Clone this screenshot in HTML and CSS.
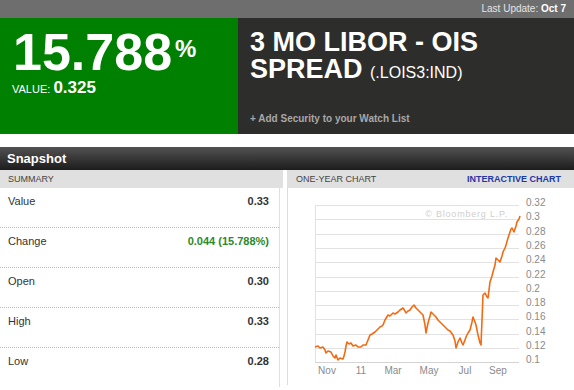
FILE: index.html
```html
<!DOCTYPE html>
<html>
<head>
  <title>3 MO LIBOR - OIS SPREAD</title>
  <link rel="stylesheet" href="styles.css">
</head>
<body>
  <div class="topbar">Last Update: <b>Oct 7</b></div>

  <div class="quote">
    <div class="quote-change">
      <div class="pct">15.788<span class="pct-sign">%</span></div>
      <div class="value-line">VALUE: <b>0.325</b></div>
    </div>
    <div class="quote-name">
      <h1>3 MO LIBOR - OIS<br>SPREAD <span class="ticker">(.LOIS3:IND)</span></h1>
      <a class="watch">+ Add Security to your Watch List</a>
    </div>
  </div>

  <div class="section-bar">Snapshot</div>

  <div class="snapshot">
    <div class="summary">
      <div class="sub-head">SUMMARY</div>
      <div class="rows">
        <div class="row"><span>Value</span><b>0.33</b></div>
        <div class="row"><span>Change</span><b class="up">0.044 (15.788%)</b></div>
        <div class="row"><span>Open</span><b>0.30</b></div>
        <div class="row"><span>High</span><b>0.33</b></div>
        <div class="row last"><span>Low</span><b>0.28</b></div>
      </div>
    </div>

    <div class="chart">
      <div class="sub-head"><span>ONE-YEAR CHART</span><a class="chart-link">INTERACTIVE CHART</a></div>
      <div class="chart-body">
        <svg width="286" height="197" viewBox="288 188 286 197">
          <!-- grid -->
          <g stroke="#e2e2e2" stroke-width="1" fill="none">
            <path d="M315 205.5H519 M315 219.5H519 M315 234.5H519 M315 248.5H519 M315 262.5H519 M315 277.5H519 M315 291.5H519 M315 305.5H519 M315 319.5H519 M315 334.5H519 M315 348.5H519"/>
            <path d="M315.5 205V362"/>
          </g>
          <path d="M315 362.5H519" stroke="#d4d4d4" stroke-width="1"/>
          <text class="mark" x="508" y="217" text-anchor="end">© Bloomberg L.P.</text>
          <!-- y labels -->
          <g class="axis">
            <text x="526" y="206">0.32</text>
            <text x="526" y="220">0.3</text>
            <text x="526" y="235">0.28</text>
            <text x="526" y="249">0.26</text>
            <text x="526" y="263">0.24</text>
            <text x="526" y="278">0.22</text>
            <text x="526" y="292">0.2</text>
            <text x="526" y="306">0.18</text>
            <text x="526" y="320">0.16</text>
            <text x="526" y="335">0.14</text>
            <text x="526" y="349">0.12</text>
            <text x="526" y="363">0.1</text>
          </g>
          <g class="axis" text-anchor="middle">
            <text x="327" y="374">Nov</text>
            <text x="361" y="374">11</text>
            <text x="393" y="374">Mar</text>
            <text x="429" y="374">May</text>
            <text x="465" y="374">Jul</text>
            <text x="498" y="374">Sep</text>
          </g>
          <polyline fill="none" stroke="#f26b12" stroke-width="1.6" stroke-linejoin="round"
            points="315,347 318,346 320,348 323,347 325,350 326,353 328,351 331,352 333,356 335,358 336,355 338,360 340,358 343,359 344,356 345,352 346,346 347,342 349,344 351,343 353,346 356,345 358,347 361,347 363,345 366,345 368,340 370,335 372,334 375,332 377,330 380,327 382,326 383,325 385,320 388,315 390,316 393,313 395,314 398,312 400,310 403,308 405,311 406,313 408,311 410,310 412,307 414,305 416,308 418,310 420,312 423,315 425,325 426,333 427,328 428,323 430,316 431,312 433,314 436,317 438,320 440,322 443,325 445,327 448,330 450,331 453,335 455,341 456,348 458,342 460,338 462,343 463,345 465,340 466,337 468,333 470,330 472,322 473,317 475,322 476,325 478,335 480,343 481,345 482,320 483,295 485,293 487,297 488,298 490,282 492,276 493,272 495,265 496,258 498,260 500,262 502,256 503,252 505,248 506,245 508,238 509,235 511,229 512,228 514,232 516,226 517,222 519,219 520,216"/>
        </svg>
      </div>
    </div>
  </div>
</body>
</html>
```

FILE: styles.css
```css
body {
  margin: 0;
  font-family: "Liberation Sans", Arial, sans-serif;
  color: #333;
  background: #fff;
}
.topbar {
  height: 18px;
  line-height: 18px;
  background: #6e6e6e;
  color: #e4e4e4;
  font-size: 10px;
  text-align: right;
  padding-right: 8px;
}
.topbar b {
  color: #fff;
}
.quote {
  display: flex;
  height: 116px;
  margin-bottom: 13px;
}
.quote-change {
  width: 238px;
  background: #008000;
  color: #fff;
  padding: 6px 0 0 12px;
  box-sizing: border-box;
}
.pct {
  font-size: 52px;
  line-height: 56px;
  font-weight: bold;
  padding-left: 1px;
}
.pct-sign {
  font-size: 24px;
  line-height: 24px;
  vertical-align: 13px;
  margin-left: 3px;
}
.value-line {
  font-size: 11px;
  line-height: 16px;
}
.value-line b {
  font-size: 17px;
}
.quote-name {
  flex: 1;
  background: #2d2d2b;
  color: #fff;
  padding: 11px 0 10px 12px;
  display: flex;
  flex-direction: column;
}
.quote-name h1 {
  margin: 0;
  font-size: 27px;
  line-height: 27px;
  font-weight: bold;
}
.ticker {
  font-size: 16px;
  font-weight: normal;
}
.watch {
  margin-top: auto;
  font-size: 10px;
  font-weight: bold;
  color: #a8a8a8;
}
.section-bar {
  height: 23px;
  line-height: 23px;
  background: linear-gradient(to bottom, #525252, #1c1c1c);
  color: #fff;
  font-size: 13px;
  font-weight: bold;
  padding-left: 7px;
}
.snapshot {
  display: grid;
  grid-template-columns: 283px 287px;
  column-gap: 4px;
}
.sub-head {
  height: 18px;
  line-height: 18px;
  background: #e0e0e0;
  font-size: 9px;
  color: #444;
  padding: 0 8px;
  display: flex;
  justify-content: space-between;
}
.rows {
  margin-right: 3px;
  border-right: 1px solid #e0e0e0;
  min-height: 197px;
}
.row {
  height: 34px;
  border-bottom: 1px dotted #b8b8b8;
  display: flex;
  justify-content: space-between;
  font-size: 11px;
  line-height: 16px;
  padding: 5px 10px 0 8px;
}
.row.last {
  border-bottom: none;
}
.row b {
  color: #333;
}
.row b.up {
  color: #2a8a2a;
}
.chart .sub-head {
  padding: 0 13px 0 9px;
}
.chart-link {
  color: #2237a6;
  font-weight: bold;
}
.chart-body {
  border-left: 1px solid #dcdcdc;
  height: 197px;
}
.chart-body svg {
  display: block;
}
.axis text {
  font-family: "Liberation Sans", Arial, sans-serif;
  font-size: 10px;
  fill: #8a8a8a;
}
.mark {
  font-family: "Liberation Sans", Arial, sans-serif;
  font-size: 9px;
  fill: #cfcfcf;
  letter-spacing: 0.8px;
}
```
